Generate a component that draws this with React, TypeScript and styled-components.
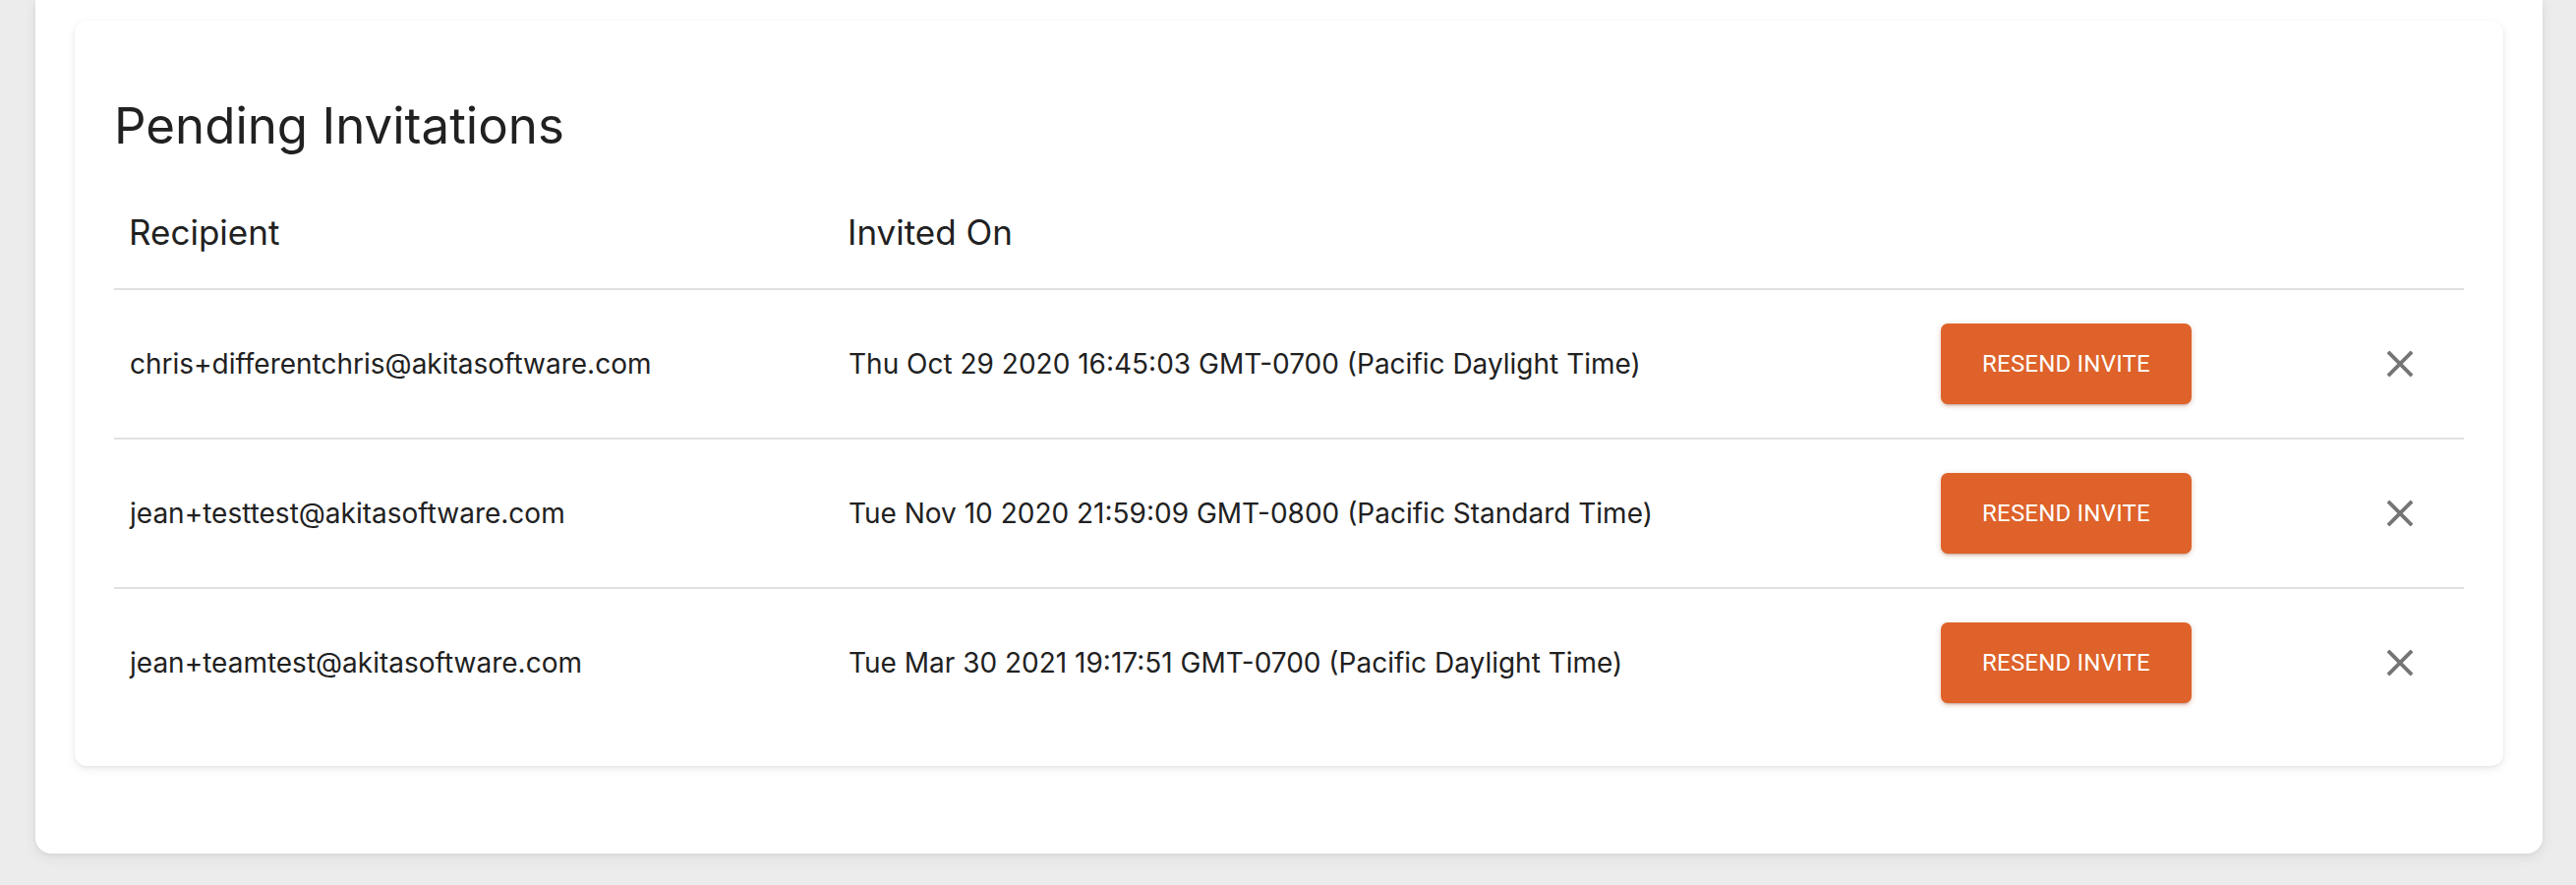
import React from "react";
import styled, { createGlobalStyle } from "styled-components";

const GlobalStyle = createGlobalStyle`
  html, body {
    margin: 0;
    padding: 0;
    background: #ececec;
  }
  body {
    font-family: Inter, "Noto Sans", sans-serif;
    color: #212121;
  }
`;

const Page = styled.div`
  display: flex;
  padding: 0 34px 0 36px;
  min-height: 900px;
  box-sizing: border-box;
`;

const Outer = styled.main`
  flex: 1;
  height: 868px;
  background: #ffffff;
  border-radius: 0 0 16px 16px;
  box-shadow: 0 4px 14px rgba(0, 0, 0, 0.07), 0 1px 4px rgba(0, 0, 0, 0.05);
  padding: 21px 40px 0 40px;
  box-sizing: border-box;
`;

const Card = styled.section`
  background: #ffffff;
  border-radius: 12px;
  box-shadow: 0 3px 10px rgba(0, 0, 0, 0.08), 0 1px 3px rgba(0, 0, 0, 0.06);
  padding: 77px 40px 30px 40px;
`;

const Heading = styled.h2`
  margin: 0;
  font-family: Inter, sans-serif;
  font-weight: 400;
  font-size: 51px;
  line-height: 60px;
  color: #212121;
`;

const Table = styled.div`
  display: flex;
  flex-direction: column;
`;

const Row = styled.div<{ $header?: boolean; $last?: boolean }>`
  display: grid;
  grid-template-columns: 731px 1110px 1fr 150px;
  align-items: ${(p) => (p.$header ? "end" : "center")};
  box-sizing: border-box;
  height: ${(p) => (p.$header ? "auto" : p.$last ? "150px" : "152px")};
  padding: ${(p) => (p.$header ? "53px 0 31px 0" : "0")};
  border-bottom: ${(p) => (p.$last ? "none" : "2px solid #e0e0e0")};
`;

const HeadCell = styled.div`
  padding-left: 15px;
  font-family: Inter, sans-serif;
  font-size: 35px;
  line-height: 51px;
  font-weight: 400;
  color: #212121;
`;

const Cell = styled.div`
  padding-left: 16px;
  font-family: Inter, sans-serif;
  font-size: 28px;
  line-height: 42px;
  color: #212121;
  white-space: nowrap;
`;

const ActionCell = styled.div`
  padding-left: 17px;
  display: flex;
  align-items: center;
`;

const CloseCell = styled.div`
  display: flex;
  justify-content: flex-end;
  padding-right: 21px;
`;

const ResendButton = styled.button`
  width: 255px;
  height: 82px;
  border: none;
  border-radius: 7px;
  background: #de6229;
  color: #ffffff;
  font-family: Roboto, "Liberation Sans", sans-serif;
  font-weight: 400;
  font-size: 24px;
  letter-spacing: 0.2px;
  text-transform: uppercase;
  box-shadow: 0 3px 2px -2px rgba(0, 0, 0, 0.2), 0 2px 4px rgba(222, 98, 41, 0.25),
    0 1px 8px rgba(0, 0, 0, 0.08);
  cursor: pointer;
`;

const IconButton = styled.button`
  width: 88px;
  height: 88px;
  border: none;
  background: transparent;
  border-radius: 50%;
  padding: 0;
  display: flex;
  align-items: center;
  justify-content: center;
  color: #757575;
  cursor: pointer;
`;

const CloseIcon = () => (
  <svg width="46" height="46" viewBox="0 0 24 24" fill="currentColor" aria-hidden="true">
    <path d="M19 6.41 17.59 5 12 10.59 6.41 5 5 6.41 10.59 12 5 17.59 6.41 19 12 13.41 17.59 19 19 17.59 13.41 12z" />
  </svg>
);

const invites = [
  {
    email: "chris+differentchris@akitasoftware.com",
    date: "Thu Oct 29 2020 16:45:03 GMT-0700 (Pacific Daylight Time)",
  },
  {
    email: "jean+testtest@akitasoftware.com",
    date: "Tue Nov 10 2020 21:59:09 GMT-0800 (Pacific Standard Time)",
  },
  {
    email: "jean+teamtest@akitasoftware.com",
    date: "Tue Mar 30 2021 19:17:51 GMT-0700 (Pacific Daylight Time)",
  },
];

export default function App() {
  return (
    <>
      <GlobalStyle />
      <Page>
        <Outer>
          <Card>
            <Heading>Pending Invitations</Heading>
            <Table>
              <Row $header>
                <HeadCell>Recipient</HeadCell>
                <HeadCell>Invited On</HeadCell>
                <HeadCell />
                <HeadCell />
              </Row>
              {invites.map((inv, i) => (
                <Row key={inv.email} $last={i === invites.length - 1}>
                  <Cell>{inv.email}</Cell>
                  <Cell>{inv.date}</Cell>
                  <ActionCell>
                    <ResendButton>Resend Invite</ResendButton>
                  </ActionCell>
                  <CloseCell>
                    <IconButton aria-label="delete">
                      <CloseIcon />
                    </IconButton>
                  </CloseCell>
                </Row>
              ))}
            </Table>
          </Card>
        </Outer>
      </Page>
    </>
  );
}
